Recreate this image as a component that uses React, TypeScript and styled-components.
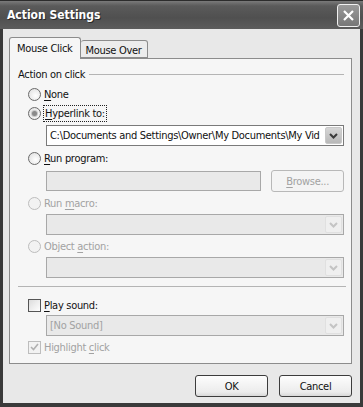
import styled, { createGlobalStyle } from "styled-components";

const GlobalStyle = createGlobalStyle`
  html, body {
    margin: 0;
    padding: 0;
    background: #2e2e2e;
  }
  * {
    box-sizing: border-box;
  }
`;

const UI_FONT = `"DejaVu Sans Condensed", "DejaVu Sans", sans-serif`;

const Frame = styled.div`
  display: flex;
  flex-direction: column;
  width: 363px;
  height: 407px;
  background: #3a3a3a;
  font-family: ${UI_FONT};
  font-size: 11px;
  letter-spacing: -0.3px;
  color: #111;
`;

const TitleBar = styled.div`
  display: flex;
  align-items: center;
  justify-content: space-between;
  height: 29px;
  padding: 0 3px 0 7px;
  background: linear-gradient(#7a7a7a 0%, #5a5a5a 18%, #505050 60%, #5c5c5c 100%);
  border-top: 1px solid #2c2c2c;
`;

const Title = styled.span`
  color: #fff;
  font-weight: bold;
  font-size: 12px;
  letter-spacing: 0;
  text-shadow: 1px 1px 0 #2a2a2a;
`;

const CloseButton = styled.div`
  display: flex;
  align-items: center;
  justify-content: center;
  width: 23px;
  height: 23px;
  border: 1px solid #f0f0f0;
  border-radius: 3px;
  background: linear-gradient(#9a9a9a, #777);
`;

const Client = styled.div`
  flex: 1;
  display: flex;
  flex-direction: column;
  margin: 0 3px 4px 3px;
  padding: 7px 8px 0 6px;
  background: #e8e8e8;
`;

const TabStrip = styled.div`
  display: flex;
  align-items: flex-end;
  height: 22px;
  position: relative;
  z-index: 1;
`;

const Tab = styled.div<{ $active?: boolean }>`
  display: flex;
  align-items: center;
  padding: 0 ${(p) => (p.$active ? "7px" : "5px")};
  height: ${(p) => (p.$active ? "22px" : "18px")};
  background: ${(p) => (p.$active ? "#f6f6f6" : "#ececec")};
  border: 1px solid #8c8c8c;
  border-bottom: ${(p) => (p.$active ? "none" : "1px solid #8c8c8c")};
  border-left: ${(p) => (p.$active ? "1px solid #8c8c8c" : "none")};
  border-radius: 3px 3px 0 0;
  margin-bottom: ${(p) => (p.$active ? "-1px" : "0")};
  padding-top: ${(p) => (p.$active ? "0" : "2px")};
`;

const Panel = styled.div`
  display: flex;
  flex-direction: column;
  width: 343px;
  height: 306px;
  background: #f6f6f6;
  border: 1px solid #8c8c8c;
  padding: 8px 7px 0 8px;
`;

const Legend = styled.div`
  display: flex;
  align-items: center;
  gap: 4px;
  height: 14px;
  &::after {
    content: "";
    flex: 1;
    border-top: 1px solid #b4b4b4;
  }
`;

const Stack = styled.div`
  display: flex;
  flex-direction: column;
  padding-left: 10px;
`;

const OptionRow = styled.div<{ $top?: number; $disabled?: boolean }>`
  display: flex;
  align-items: center;
  gap: 3px;
  height: 16px;
  margin-top: ${(p) => p.$top ?? 0}px;
  color: ${(p) => (p.$disabled ? "#a2a2a2" : "#111")};
`;

const Radio = styled.span<{ $checked?: boolean; $disabled?: boolean }>`
  display: inline-flex;
  align-items: center;
  justify-content: center;
  width: 13px;
  height: 13px;
  border-radius: 50%;
  border: 1px solid ${(p) => (p.$disabled ? "#bdbdbd" : "#6a6a6a")};
  background: ${(p) =>
    p.$disabled ? "#f2f2f2" : "radial-gradient(circle at 60% 60%, #fff, #dcdcdc)"};
  &::after {
    content: "";
    display: ${(p) => (p.$checked ? "block" : "none")};
    width: 5px;
    height: 5px;
    border-radius: 50%;
    background: #8a8a8a;
    box-shadow: 0 0 0 1px #c8c8c8;
  }
`;

const Check = styled.span<{ $disabled?: boolean }>`
  display: inline-flex;
  align-items: center;
  justify-content: center;
  width: 13px;
  height: 13px;
  border: 1px solid ${(p) => (p.$disabled ? "#bdbdbd" : "#555")};
  background: ${(p) => (p.$disabled ? "#f2f2f2" : "linear-gradient(135deg, #dcdcdc, #fff)")};
`;

const Focus = styled.span`
  outline: 1px dotted #222;
  outline-offset: 0;
  padding: 0 1px;
  line-height: 15px;
`;

const Key = styled.span`
  text-decoration: underline;
  text-underline-offset: 2px;
`;

const Indented = styled.div<{ $top?: number }>`
  display: flex;
  align-items: center;
  gap: 10px;
  margin-top: ${(p) => p.$top ?? 0}px;
  padding-left: 18px;
`;

const Combo = styled.div<{ $disabled?: boolean }>`
  display: flex;
  align-items: center;
  justify-content: space-between;
  width: 300px;
  height: 21px;
  padding: 0 1px 0 3px;
  border: 1px solid ${(p) => (p.$disabled ? "#a8a8a8" : "#7a7a7a")};
  background: ${(p) => (p.$disabled ? "#e9e9e9" : "#fff")};
  color: ${(p) => (p.$disabled ? "#a2a2a2" : "#111")};
  white-space: nowrap;
`;

const ComboText = styled.span`
  flex: 1;
`;

const DropButton = styled.span<{ $disabled?: boolean }>`
  display: flex;
  align-items: center;
  justify-content: center;
  flex: none;
  width: 17px;
  height: 17px;
  border-radius: 2px;
  background: ${(p) => (p.$disabled ? "#efefef" : "linear-gradient(#d6d6d6, #b8b8b8)")};
  border: 1px solid ${(p) => (p.$disabled ? "#e0e0e0" : "#c8c8c8")};
`;

const TextBox = styled.div`
  width: 216px;
  height: 20px;
  border: 1px solid #a8a8a8;
  background: #e9e9e9;
`;

const Button = styled.div<{ $disabled?: boolean }>`
  display: flex;
  align-items: center;
  justify-content: center;
  width: 73px;
  height: 22px;
  border: 1px solid ${(p) => (p.$disabled ? "#b8b8b8" : "#3c3c3c")};
  border-radius: 3px;
  background: ${(p) => (p.$disabled ? "#f4f4f4" : "linear-gradient(#fdfdfd, #ececec 80%, #d8d8d8)")};
  color: ${(p) => (p.$disabled ? "#a2a2a2" : "#111")};
`;

const Separator = styled.div`
  margin: 8px 0 0 0;
  border-top: 1px solid #b4b4b4;
  width: 328px;
`;

const ButtonBar = styled.div`
  display: flex;
  justify-content: flex-end;
  gap: 11px;
  margin-top: 11px;
`;

const Chevron = ({ color }: { color: string }) => (
  <svg width="9" height="6" viewBox="0 0 9 6">
    <path d="M1 1 L4.5 4.5 L8 1" stroke={color} strokeWidth="2" fill="none" />
  </svg>
);

const CloseGlyph = () => (
  <svg width="13" height="13" viewBox="0 0 13 13">
    <path d="M2 2 L11 11 M11 2 L2 11" stroke="#fff" strokeWidth="2.2" />
  </svg>
);

const Tick = () => (
  <svg width="9" height="8" viewBox="0 0 9 8">
    <path d="M1 4 L3.5 6.5 L8 1" stroke="#b0b0b0" strokeWidth="1.6" fill="none" />
  </svg>
);

const App = () => {
  return (
    <>
      <GlobalStyle />
      <Frame>
        <TitleBar>
          <Title>Action Settings</Title>
          <CloseButton>
            <CloseGlyph />
          </CloseButton>
        </TitleBar>
        <Client>
          <TabStrip>
            <Tab $active>Mouse Click</Tab>
            <Tab>Mouse Over</Tab>
          </TabStrip>
          <Panel>
            <Legend>Action on click</Legend>
            <Stack>
              <OptionRow $top={5}>
                <Radio />
                <span><Key>N</Key>one</span>
              </OptionRow>
              <OptionRow $top={3}>
                <Radio $checked />
                <Focus><Key>H</Key>yperlink to:</Focus>
              </OptionRow>
              <Indented $top={4}>
                <Combo>
                  <ComboText>C:\Documents and Settings\Owner\My Documents\My Vid</ComboText>
                  <DropButton>
                    <Chevron color="#3a3a3a" />
                  </DropButton>
                </Combo>
              </Indented>
              <OptionRow $top={4}>
                <Radio />
                <span><Key>R</Key>un program:</span>
              </OptionRow>
              <Indented $top={4}>
                <TextBox />
                <Button $disabled><span><Key>B</Key>rowse...</span></Button>
              </Indented>
              <OptionRow $top={3} $disabled>
                <Radio $disabled />
                <span>Run <Key>m</Key>acro:</span>
              </OptionRow>
              <Indented $top={3}>
                <Combo $disabled>
                  <ComboText />
                  <DropButton $disabled>
                    <Chevron color="#c4c4c4" />
                  </DropButton>
                </Combo>
              </Indented>
              <OptionRow $top={3} $disabled>
                <Radio $disabled />
                <span>Object <Key>a</Key>ction:</span>
              </OptionRow>
              <Indented $top={3}>
                <Combo $disabled>
                  <ComboText />
                  <DropButton $disabled>
                    <Chevron color="#c4c4c4" />
                  </DropButton>
                </Combo>
              </Indented>
            </Stack>
            <Separator />
            <Stack>
              <OptionRow $top={10}>
                <Check />
                <span><Key>P</Key>lay sound:</span>
              </OptionRow>
              <Indented $top={2}>
                <Combo $disabled>
                  <ComboText>[No Sound]</ComboText>
                  <DropButton $disabled>
                    <Chevron color="#c4c4c4" />
                  </DropButton>
                </Combo>
              </Indented>
              <OptionRow $top={3} $disabled>
                <Check $disabled>
                  <Tick />
                </Check>
                <span>Highlight <Key>c</Key>lick</span>
              </OptionRow>
            </Stack>
          </Panel>
          <ButtonBar>
            <Button>OK</Button>
            <Button>Cancel</Button>
          </ButtonBar>
        </Client>
      </Frame>
    </>
  );
};

export default App;
